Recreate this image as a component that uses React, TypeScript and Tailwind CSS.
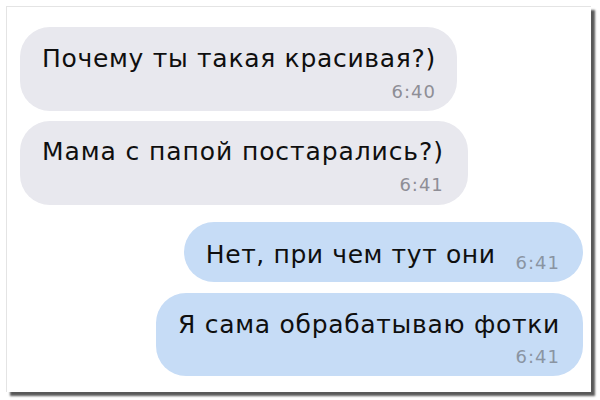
import React from "react";

const font = { fontFamily: '"DejaVu Sans", "Liberation Sans", sans-serif' };

export default function App() {
  return (
    <div className="w-[600px] h-[400px] bg-white pt-[6px] pl-[6px] overflow-hidden" style={font}>
      <div className="w-[585px] h-[386px] bg-white border-l border-t border-[#e4e4e4] shadow-[4px_4px_2px_rgba(0,0,0,0.65)] flex flex-col pt-[20px] pl-[13px] pr-[8px]">
        <div className="self-start rounded-[30px] bg-[#e8e8ee] pt-[18px] pb-[10px] pl-[22px] pr-[21px] flex flex-col">
          <span className="text-[25px] leading-[28px] tracking-[0.7px] text-[#0f0f0f]">Почему ты такая красивая?)</span>
          <span className="self-end mt-[10px] text-[18px] leading-[18px] tracking-[1px] text-[#8e8e96]">6:40</span>
        </div>
        <div className="self-start mt-[10px] rounded-[30px] bg-[#e8e8ee] pt-[17px] pb-[11px] pl-[22px] pr-[24px] flex flex-col">
          <span className="text-[25px] leading-[28px] tracking-[0.9px] text-[#0f0f0f]">Мама с папой постарались?)</span>
          <span className="self-end mt-[10px] text-[18px] leading-[18px] tracking-[1px] text-[#8e8e96]">6:41</span>
        </div>
        <div className="self-end mt-[17px] rounded-[30px] bg-[#c6dcf6] pt-[19px] pb-[13px] pl-[22px] pr-[23px] flex flex-row items-end gap-[20px]">
          <span className="text-[25px] leading-[28px] tracking-[0.6px] text-[#0f0f0f]">Нет, при чем тут они</span>
          <span className="mb-[-3px] text-[18px] leading-[18px] tracking-[1px] text-[#8a94a2]">6:41</span>
        </div>
        <div className="self-end mt-[11px] rounded-[30px] bg-[#c6dcf6] pt-[18px] pb-[10px] pl-[22px] pr-[23px] flex flex-col">
          <span className="text-[25px] leading-[28px] tracking-[0.7px] text-[#0f0f0f]">Я сама обрабатываю фотки</span>
          <span className="self-end mt-[9px] text-[18px] leading-[18px] tracking-[1px] text-[#8a94a2]">6:41</span>
        </div>
      </div>
    </div>
  );
}
